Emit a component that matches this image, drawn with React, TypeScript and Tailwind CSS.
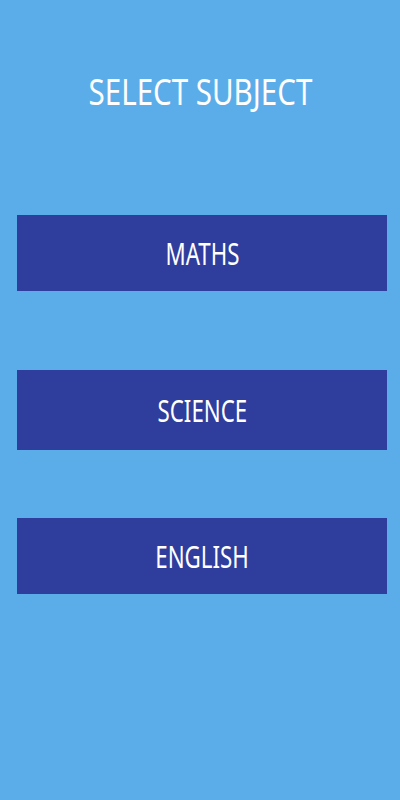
import React from "react";

const subjects = [
  { name: "MATHS", h: "h-[76px]", mt: "mt-[104px]" },
  { name: "SCIENCE", h: "h-[80px]", mt: "mt-[79px]" },
  { name: "ENGLISH", h: "h-[76px]", mt: "mt-[68px]" },
];

export default function App() {
  return (
    <div
      className="w-[400px] h-[800px] bg-[#5badea] flex flex-col overflow-hidden"
      style={{ fontFamily: '"Noto Sans", "Open Sans", sans-serif' }}
    >
      <div className="mt-[73px] h-[38px] flex items-center justify-center">
        <span className="inline-block text-white text-[36px] leading-none scale-x-[0.82]">
          SELECT SUBJECT
        </span>
      </div>
      {subjects.map((s) => (
        <button
          key={s.name}
          className={`${s.mt} ${s.h} ml-[17px] w-[370px] bg-[#2f3d9d] flex items-center justify-center`}
        >
          <span className="inline-block text-white text-[31px] leading-none scale-x-[0.72]">
            {s.name}
          </span>
        </button>
      ))}
    </div>
  );
}
